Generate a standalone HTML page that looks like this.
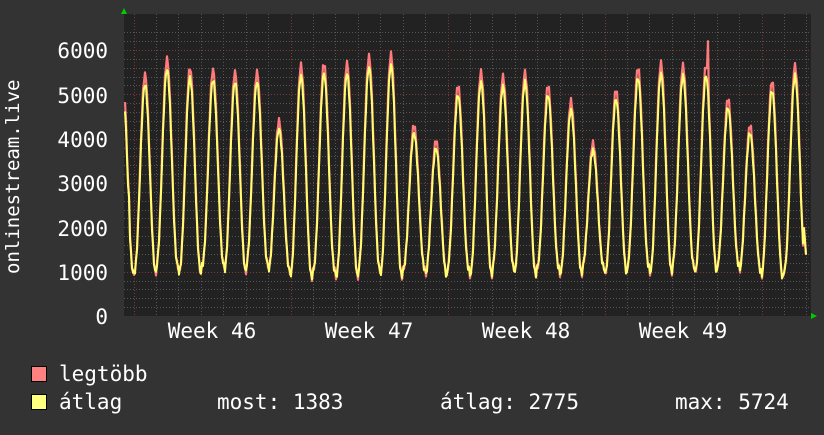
<!DOCTYPE html>
<html><head><meta charset="utf-8"><style>
html,body{margin:0;padding:0;background:#333333;}
body{width:824px;height:430px;overflow:hidden;}
text{font-family:"DejaVu Sans Mono","Liberation Mono",monospace;fill:#ffffff;}
</style></head><body>
<svg id="g" width="824" height="430" xmlns="http://www.w3.org/2000/svg">
<rect x="0" y="0" width="824" height="430" fill="#333333"/>
<rect x="124" y="14" width="687" height="302" fill="#222222"/>
<g id="grid"></g>
<g id="data"></g>
<polygon points="121,14 124,8 127,14" fill="#00cc00"/>
<polygon points="811,313 817,316 811,319" fill="#00cc00"/>
<g font-size="21" text-anchor="end">
<text x="108" y="58">6000</text>
<text x="108" y="103">5000</text>
<text x="108" y="147">4000</text>
<text x="108" y="191">3000</text>
<text x="108" y="236">2000</text>
<text x="108" y="280">1000</text>
<text x="108" y="324">0</text>
</g>
<text font-size="19" transform="translate(19,274) rotate(-90)">onlinestream.live</text>
<g font-size="21" text-anchor="middle">
<text x="212" y="338">Week 46</text>
<text x="369" y="338">Week 47</text>
<text x="526" y="338">Week 48</text>
<text x="683" y="338">Week 49</text>
</g>
<rect x="31.5" y="366.5" width="15" height="15" fill="#ff8080" stroke="#000"/>
<rect x="31.5" y="394.5" width="15" height="15" fill="#ffff80" stroke="#000"/>
<g font-size="21">
<text x="59" y="381">legtöbb</text>
<text x="59" y="409">átlag</text>
<text x="217" y="409">most: 1383</text>
<text x="440" y="409">átlag: 2775</text>
<text x="675" y="409">max: 5724</text>
</g>
</svg>
<script>
var NS="http://www.w3.org/2000/svg";
var grid=document.getElementById('grid'),data=document.getElementById('data');
function ln(x1,y1,x2,y2,c,d){var l=document.createElementNS(NS,'line');l.setAttribute('x1',x1);l.setAttribute('y1',y1);l.setAttribute('x2',x2);l.setAttribute('y2',y2);l.setAttribute('stroke',c);if(d)l.setAttribute('stroke-dasharray',d);l.setAttribute('stroke-width','1');grid.appendChild(l);}
function Y(v){return 316-v*0.04433;}
for(var v=200;v<=6400;v+=200){var y=Math.round(Y(v))+0.5;if(y<14)break;ln(124,y,811,y,v%1000==0?'#7a3a3a':'#555555','1,2');}
for(var x=133.5;x<811;x+=22.43){var xi=Math.round(x)+0.5;var maj=Math.abs(((x-133.5)/157)-Math.round((x-133.5)/157))<0.01;ln(xi,14,xi,316,maj?'#7a3a3a':'#555555','1,2');}
var peaks=[[145,5450],[167,5800],[190,5600],[213,5550],[235,5500],[257,5500],[279,4400],[301,5650],[324,5700],[347,5700],[369,5850],[391,5900],[414,4300],[436,3950],[458,5200],[481,5500],[503,5400],[525,5500],[548,5200],[571,4850],[593,3900],[616,5100],[638,5600],[661,5700],[683,5650],[706,5650],[728,4900],[750,4300],[772,5300],[795,5650]];
function peakAt(x){var b=peaks[0],d=1e9;for(var i=0;i<peaks.length;i++){var dd=Math.abs(peaks[i][0]-x);if(dd<d){d=dd;b=peaks[i];}}return b;}
function val(x,avg,seed){var p=peakAt(x);var ph=(x-p[0])/22.4*2*Math.PI;var s=(1+Math.cos(ph))/2;s=Math.pow(s,1.2);var mn=850+((p[0]*7)%300);var pk=p[1]*(avg?0.96:1);var n=Math.sin(x*3.7+seed)*70;return mn+(pk-mn)*s+n;}
function path(avg,seed){var d='';for(var x=125;x<=806;x+=1){var v=val(x,avg,seed);if(x<130)v=Math.max(v,3700-(x-125)*250);if(!avg&&x==708)v=6200;if(x>=804)v=1383+(806-x)*300;d+=(x==125?'M':'L')+x+','+Y(v).toFixed(1);}return d;}
function pth(d,c,w){var p=document.createElementNS(NS,'path');p.setAttribute('d',d);p.setAttribute('fill','none');p.setAttribute('stroke',c);p.setAttribute('stroke-width',w);p.setAttribute('stroke-linejoin','round');data.appendChild(p);}
pth(path(false,0),'#ff7a7a',2.2);
pth(path(true,1.3),'#ffff70',2);
</script>
</body></html>
